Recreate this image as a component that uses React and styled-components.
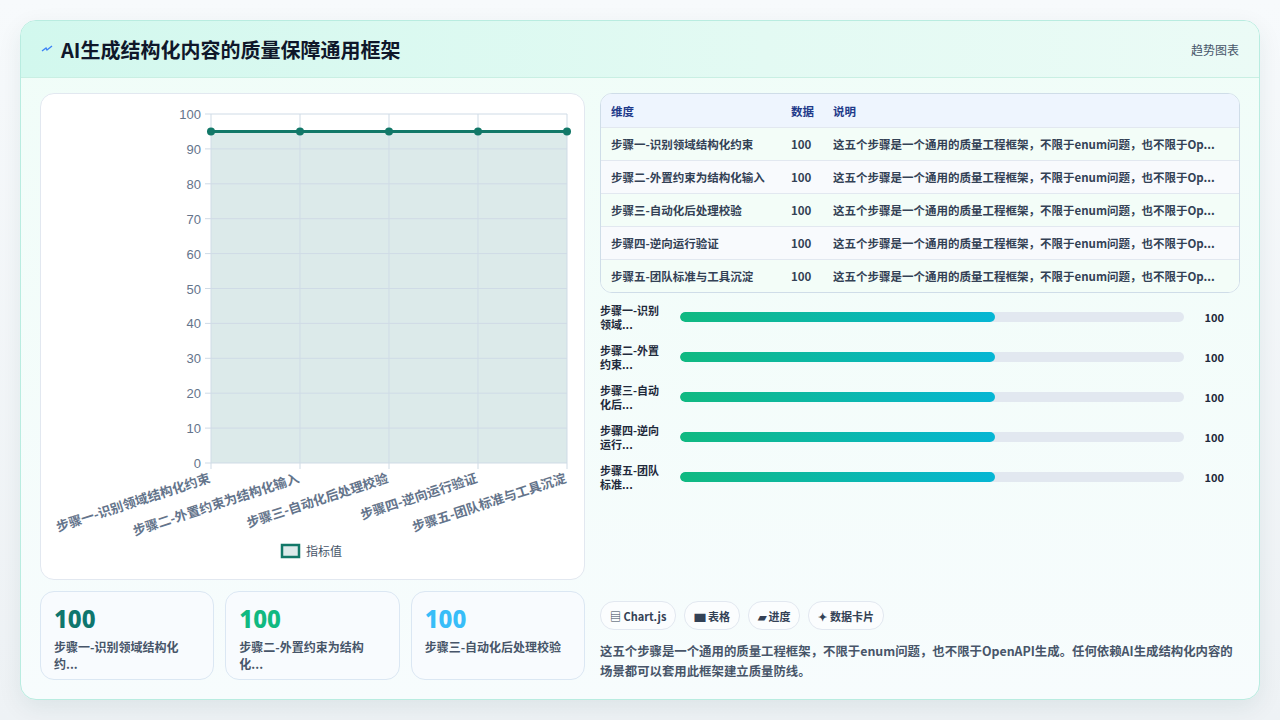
import React from "react";
import styled, { createGlobalStyle } from "styled-components";

const Global = createGlobalStyle`
  body { margin: 0; background: #eef2f5; font-family: "Noto Sans CJK SC", "Noto Sans", sans-serif; }
`;

const steps = ["步骤一-识别领域结构化约束", "步骤二-外置约束为结构化输入", "步骤三-自动化后处理校验", "步骤四-逆向运行验证", "步骤五-团队标准与工具沉淀"];
const short = ["步骤一-识别领域...", "步骤二-外置约束...", "步骤三-自动化后...", "步骤四-逆向运行...", "步骤五-团队标准..."];
const desc = "这五个步骤是一个通用的质量工程框架，不限于enum问题，也不限于Op...";

const Page = styled.div`
  width: 1280px; height: 720px; padding: 20px; box-sizing: border-box;
  background: linear-gradient(180deg, #f7fafc, #eef2f5);
`;
const Card = styled.div`
  height: 680px; box-sizing: border-box; border: 1px solid #b9ece0; border-radius: 16px;
  background: linear-gradient(180deg, #f0fdf8, #f7fcfd); overflow: hidden;
  box-shadow: 0 8px 24px rgba(15, 60, 60, 0.08);
`;
const Header = styled.div`
  height: 56px; display: flex; align-items: center; justify-content: space-between;
  padding: 0 20px; background: linear-gradient(90deg, #d2f8ee, #e3faf3 60%, #ebfbf6);
  border-bottom: 1px solid #c9efe3;
`;
const Title = styled.h1`
  margin: 0; font-size: 20px; font-weight: 700; color: #0f172a; display: flex; align-items: center; gap: 8px;
`;
const Tag = styled.span` font-size: 12px; color: #475569; `;
const Body = styled.div`
  display: grid; grid-template-columns: 545px 640px; gap: 15px; padding: 15px 19px;
`;
const Col = styled.div` display: flex; flex-direction: column; gap: 11px; `;
const ChartBox = styled.div`
  height: 487px; box-sizing: border-box; background: #fff; border: 1px solid #e2e8f0; border-radius: 14px;
`;
const Stats = styled.div` display: grid; grid-template-columns: repeat(3, 1fr); gap: 11px; `;
const Stat = styled.div`
  height: 89px; box-sizing: border-box; padding: 12px 13px; border: 1px solid #dbe7f3; border-radius: 14px;
  background: #f8fbfe;
`;
const StatNum = styled.div` font-size: 24px; font-weight: 800; color: ${p => p.c}; font-family: "Noto Sans", sans-serif; line-height: 30px; `;
const StatLabel = styled.div` font-size: 12px; color: #475569; font-weight: 600; margin-top: 4px; line-height: 17px; `;
const Table = styled.div`
  border: 1px solid #cfdde8; border-radius: 12px; overflow: hidden; background: #fff;
`;
const Row = styled.div`
  display: grid; grid-template-columns: 180px 42px 1fr; height: 33px; box-sizing: border-box; align-items: center;
  padding: 0 10px; font-size: 11.5px; font-weight: 600; color: ${p => p.head ? "#1e3a8a" : "#334155"};
  background: ${p => p.head ? "#eef5fe" : p.alt ? "#f8fafd" : "#f3fdf8"};
  border-top: ${p => p.head ? "none" : "1px solid #e2e8f0"};
  span { white-space: nowrap; overflow: hidden; }
`;
const Bars = styled.div` display: flex; flex-direction: column; gap: 12px; padding: 10px 0 0 0; height: 186px; `;
const BarRow = styled.div` display: grid; grid-template-columns: 80px 1fr 44px; align-items: center; padding-right: 12px; `;
const BarLabel = styled.div` font-size: 11px; font-weight: 700; color: #1e293b; line-height: 14px; width: 70px; `;
const Track = styled.div` height: 10px; border-radius: 5px; background: #e2e8f0; overflow: hidden; `;
const Fill = styled.div` height: 100%; border-radius: 5px; background: linear-gradient(90deg, #10b981, #06b6d4); `;
const BarVal = styled.div` font-size: 11px; font-weight: 700; color: #1e293b; text-align: right; padding-right: 4px; `;
const Chips = styled.div` display: flex; gap: 8px; margin-top: 112px; `;
const Chip = styled.div`
  height: 27px; padding: 0 9px; display: flex; align-items: center; gap: 4px; border: 1px solid #e2e8f0;
  border-radius: 14px; background: #fbfdfe; font-size: 11px; font-weight: 700; color: #334155;
`;
const Note = styled.p` margin: 11px 0 0; font-size: 12.4px; font-weight: 600; color: #475569; line-height: 20px; padding-right: 4px; `;

function Chart() {
  const x0 = 170, x1 = 526, yTop = 20, yBot = 369;
  const ys = [100, 90, 80, 70, 60, 50, 40, 30, 20, 10, 0];
  const xs = [0, 1, 2, 3, 4].map(i => x0 + (x1 - x0) * i / 4);
  const yv = v => yBot - (yBot - yTop) * v / 100;
  return (
    <svg width="545" height="487" style={{ display: "block" }}>
      <rect x={x0} y={yv(95)} width={x1 - x0} height={yBot - yv(95)} fill="#dceaea" />
      {ys.map(v => (
        <g key={v}>
          <line x1={x0 - 6} x2={x1} y1={yv(v)} y2={yv(v)} stroke="#cfdbe6" />
          <text x={x0 - 10} y={yv(v) + 5} textAnchor="end" fontSize="13" fill="#64748b" fontFamily="Liberation Sans">{v}</text>
        </g>
      ))}
      {xs.map((x, i) => (
        <g key={i}>
          <line x1={x} x2={x} y1={yTop} y2={yBot + 6} stroke="#cfdbe6" />
          <text transform={`translate(${x} ${yBot + 19}) rotate(-18)`} textAnchor="end" fontSize="13" fontWeight="700" fill="#64748b">{steps[i]}</text>
        </g>
      ))}
      <line x1={x0} x2={x1} y1={yv(95)} y2={yv(95)} stroke="#127868" strokeWidth="3" />
      {xs.map((x, i) => <circle key={i} cx={x} cy={yv(95)} r="4" fill="#127868" />)}
      <rect x="241" y="451" width="17" height="12" fill="#dceaea" stroke="#127868" strokeWidth="2.5" />
      <text x="265" y="462" fontSize="12" fill="#475569">指标值</text>
    </svg>
  );
}

export default function App() {
  return (
    <Page>
      <Global />
      <Card>
        <Header>
          <Title><svg width="12" height="10" viewBox="0 0 12 10"><path d="M1 7 L5 4 L6 6 L11 2" stroke="#3b82f6" strokeWidth="1.4" fill="none" /></svg>AI生成结构化内容的质量保障通用框架</Title>
          <Tag>趋势图表</Tag>
        </Header>
        <Body>
          <Col>
            <ChartBox><Chart /></ChartBox>
            <Stats>
              <Stat><StatNum c="#0f766e">100</StatNum><StatLabel>步骤一-识别领域结构化<br />约...</StatLabel></Stat>
              <Stat><StatNum c="#10b981">100</StatNum><StatLabel>步骤二-外置约束为结构<br />化...</StatLabel></Stat>
              <Stat><StatNum c="#38bdf8">100</StatNum><StatLabel>步骤三-自动化后处理校验</StatLabel></Stat>
            </Stats>
          </Col>
          <div>
            <Table>
              <Row head><span>维度</span><span>数据</span><span>说明</span></Row>
              {steps.map((s, i) => (
                <Row key={s} alt={i % 2 === 1}><span>{s}</span><span>100</span><span>{desc}</span></Row>
              ))}
            </Table>
            <Bars>
              {short.map(s => (
                <BarRow key={s}>
                  <BarLabel>{s}</BarLabel>
                  <Track><Fill style={{ width: "62.5%" }} /></Track>
                  <BarVal>100</BarVal>
                </BarRow>
              ))}
            </Bars>
            <Chips>
              <Chip>▤ Chart.js</Chip>
              <Chip>▆ 表格</Chip>
              <Chip>▰ 进度</Chip>
              <Chip>✦ 数据卡片</Chip>
            </Chips>
            <Note>这五个步骤是一个通用的质量工程框架，不限于enum问题，也不限于OpenAPI生成。任何依赖AI生成结构化内容的场景都可以套用此框架建立质量防线。</Note>
          </div>
        </Body>
      </Card>
    </Page>
  );
}
